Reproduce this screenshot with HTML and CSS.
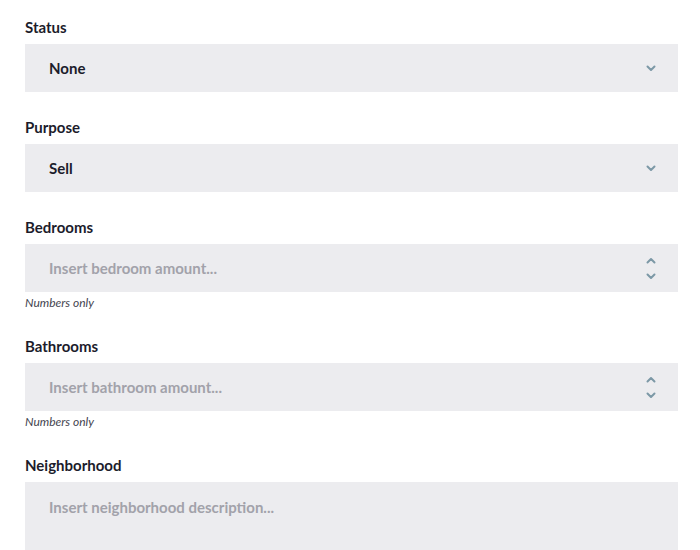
FILE: index.html
```html
<!DOCTYPE html>
<html lang="en">
<head>
    <meta charset="UTF-8">
    <meta name="viewport" content="width=device-width, initial-scale=1.0">
    <title>Listing details</title>
    <link rel="stylesheet" href="styles.css">
</head>
<body>
    <form class="listing-form">
        <div class="field">
            <label for="status">Status</label>
            <div class="box">
                <select id="status">
                    <option>None</option>
                    <option>Available</option>
                    <option>Sold</option>
                </select>
                <svg class="chevron" width="10" height="7" viewBox="0 0 10 7"><path d="M1.5 1.5l3.5 3.5 3.5-3.5" /></svg>
            </div>
        </div>

        <div class="field">
            <label for="purpose">Purpose</label>
            <div class="box">
                <select id="purpose">
                    <option>Sell</option>
                    <option>Rent</option>
                </select>
                <svg class="chevron" width="10" height="7" viewBox="0 0 10 7"><path d="M1.5 1.5l3.5 3.5 3.5-3.5" /></svg>
            </div>
        </div>

        <div class="field">
            <label for="bedrooms">Bedrooms</label>
            <div class="box">
                <input type="number" id="bedrooms" placeholder="Insert bedroom amount...">
                <div class="spinner">
                    <svg width="10" height="7" viewBox="0 0 10 7"><path d="M1.5 5.5l3.5-3.5 3.5 3.5" /></svg>
                    <svg width="10" height="7" viewBox="0 0 10 7"><path d="M1.5 1.5l3.5 3.5 3.5-3.5" /></svg>
                </div>
            </div>
            <p class="hint">Numbers only</p>
        </div>

        <div class="field">
            <label for="bathrooms">Bathrooms</label>
            <div class="box">
                <input type="number" id="bathrooms" placeholder="Insert bathroom amount...">
                <div class="spinner">
                    <svg width="10" height="7" viewBox="0 0 10 7"><path d="M1.5 5.5l3.5-3.5 3.5 3.5" /></svg>
                    <svg width="10" height="7" viewBox="0 0 10 7"><path d="M1.5 1.5l3.5 3.5 3.5-3.5" /></svg>
                </div>
            </div>
            <p class="hint">Numbers only</p>
        </div>

        <div class="field">
            <label for="neighborhood">Neighborhood</label>
            <textarea id="neighborhood" class="box area" placeholder="Insert neighborhood description..."></textarea>
        </div>
    </form>
</body>
</html>
```

FILE: styles.css
```css
body {
    font-family: Lato, "Open Sans", sans-serif;
    background-color: #ffffff;
    color: #1c1c2b;
    margin: 0;
    padding: 17px 22px 0 25px;
}

.listing-form {
    display: flex;
    flex-direction: column;
    gap: 25px;
}

.field {
    display: flex;
    flex-direction: column;
}

label {
    font-size: 15px;
    font-weight: 700;
    line-height: 20px;
    margin-bottom: 7px;
}

.box {
    display: flex;
    align-items: center;
    height: 48px;
    background-color: #ececef;
    padding: 0 22px 0 24px;
    box-sizing: border-box;
}

select,
input,
textarea {
    flex: 1;
    appearance: none;
    -moz-appearance: textfield;
    background: transparent;
    border: none;
    outline: none;
    padding: 0;
    font-family: inherit;
    font-size: 15px;
    font-weight: 700;
    color: #1c1c2b;
}

input::-webkit-outer-spin-button,
input::-webkit-inner-spin-button {
    -webkit-appearance: none;
    margin: 0;
}

input::placeholder,
textarea::placeholder {
    color: #a2a2aa;
    opacity: 1;
}

svg path {
    fill: none;
    stroke: #7c98a6;
    stroke-width: 2;
    stroke-linecap: round;
    stroke-linejoin: round;
}

.spinner {
    display: flex;
    flex-direction: column;
    gap: 9px;
}

.spinner svg {
    display: block;
}

.hint {
    margin: 3px 0 0;
    font-size: 12px;
    font-style: italic;
    line-height: 16px;
    color: #44444f;
}

.area {
    display: block;
    height: 90px;
    padding: 14px 24px;
    resize: none;
    line-height: 22px;
}
```
